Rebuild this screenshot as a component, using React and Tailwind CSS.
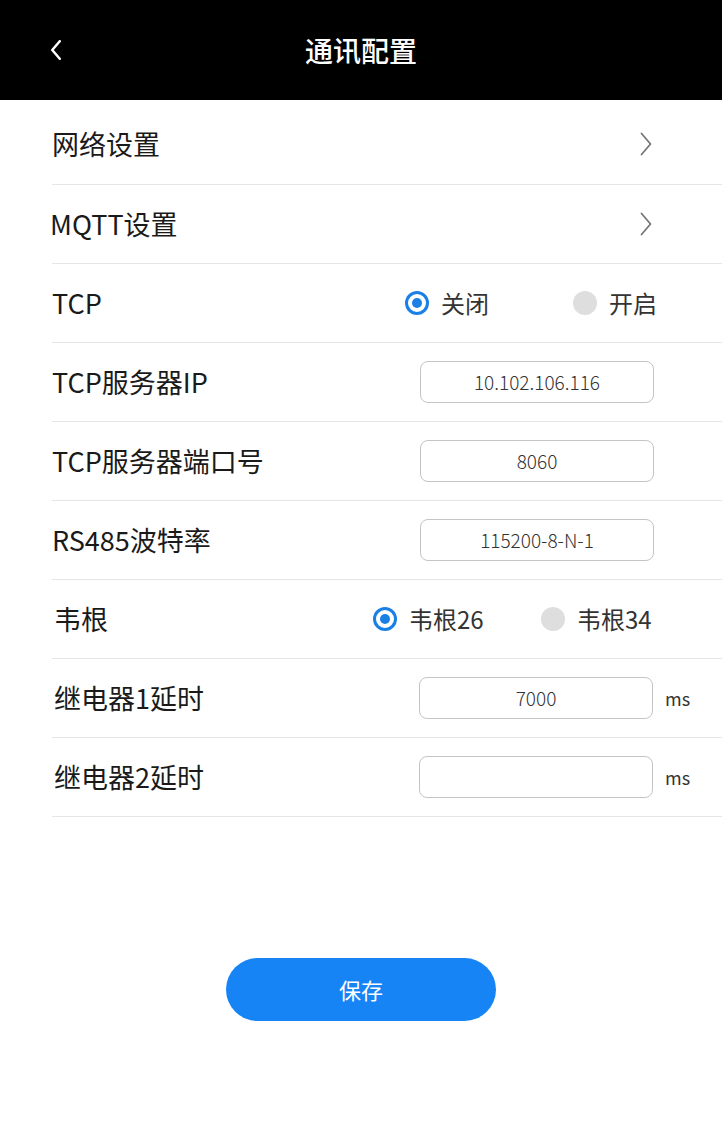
import React, { useState } from 'react';

// ─── bits ────────────────────────────────────────────────────────────────────

const Chevron = ({ className = '', width = 1.8 }) => (
  <svg viewBox="0 0 12 24" className={className} fill="none">
    <path d="M1.5 1.5 L10.5 12 L1.5 22.5" stroke="currentColor" strokeWidth={width} strokeLinecap="round" strokeLinejoin="round" />
  </svg>
);

const Radio = ({ checked, label, onClick }) => (
  <button onClick={onClick} className="flex items-center gap-3 w-[168px] shrink-0">
    {checked ? (
      <span className="w-6 h-6 rounded-full border-[3px] border-[#1a80e6] flex items-center justify-center">
        <span className="w-[10px] h-[10px] rounded-full bg-[#1a80e6]" />
      </span>
    ) : (
      <span className="w-6 h-6 rounded-full bg-[#dedede]" />
    )}
    <span className="text-[24px] text-[#333]">{label}</span>
  </button>
);

const Row = ({ children, first }) => (
  <div className={`ml-[52px] border-b border-[#e6e6e6] flex items-center ${first ? 'h-[85px] pt-1' : 'h-[79px]'}`}>
    {children}
  </div>
);

const Field = ({ value }) => (
  <div className="w-[234px] h-[42px] shrink-0 rounded-lg border border-[#c4c4c4] flex items-center justify-center text-[19px] font-light text-[#333]">
    {value}
  </div>
);

// ─── page ────────────────────────────────────────────────────────────────────

export default function App() {
  const [tcp, setTcp] = useState('off');
  const [wg, setWg] = useState('26');

  return (
    <div className="w-[722px] min-h-[1129px] bg-white text-[#1a1a1a]" style={{ fontFamily: '"Noto Sans CJK SC", "Noto Sans", sans-serif' }}>
      {/* header */}
      <div className="h-[100px] bg-black flex items-center relative">
        <Chevron className="w-3 h-5 text-white rotate-180 ml-[50px]" width={3} />
        <p className="absolute left-0 right-0 text-center text-white text-[28px] font-medium">通讯配置</p>
      </div>

      <Row first>
        <p className="text-[27px] w-[588px] shrink-0">网络设置</p>
        <Chevron className="w-3 h-6 text-[#777]" />
      </Row>
      <Row>
        <p className="text-[27px] w-[590px] shrink-0 -ml-[2px]">MQTT设置</p>
        <Chevron className="w-3 h-6 text-[#777]" />
      </Row>
      <Row>
        <p className="text-[27px] w-[353px] shrink-0">TCP</p>
        <Radio checked={tcp === 'off'} label="关闭" onClick={() => setTcp('off')} />
        <Radio checked={tcp === 'on'} label="开启" onClick={() => setTcp('on')} />
      </Row>
      <Row>
        <p className="text-[27px] w-[368px] shrink-0">TCP服务器IP</p>
        <Field value="10.102.106.116" />
      </Row>
      <Row>
        <p className="text-[27px] w-[368px] shrink-0">TCP服务器端口号</p>
        <Field value="8060" />
      </Row>
      <Row>
        <p className="text-[27px] w-[368px] shrink-0">RS485波特率</p>
        <Field value="115200-8-N-1" />
      </Row>
      <Row>
        <p className="text-[27px] w-[321px] shrink-0 pl-[2px]">韦根</p>
        <Radio checked={wg === '26'} label="韦根26" onClick={() => setWg('26')} />
        <Radio checked={wg === '34'} label="韦根34" onClick={() => setWg('34')} />
      </Row>
      <Row>
        <p className="text-[27px] w-[367px] shrink-0 pl-[2px]">继电器1延时</p>
        <Field value="7000" />
        <span className="ml-3 text-[18px] text-[#333]">ms</span>
      </Row>
      <Row>
        <p className="text-[27px] w-[367px] shrink-0 pl-[2px]">继电器2延时</p>
        <Field value="" />
        <span className="ml-3 text-[18px] text-[#333]">ms</span>
      </Row>

      {/* save */}
      <div className="flex justify-center pt-[141px]">
        <button className="w-[270px] h-[63px] rounded-full bg-[#1784f5] text-white text-[22px]">保存</button>
      </div>
    </div>
  );
}
